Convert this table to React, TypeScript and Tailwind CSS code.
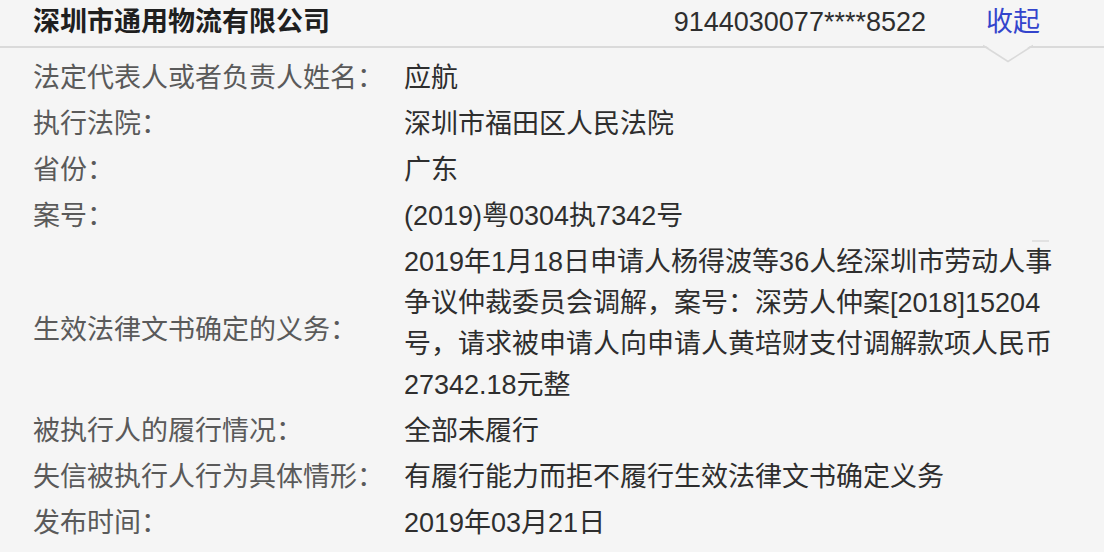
const rows: { label: string; value: string[] }[] = [
  { label: "法定代表人或者负责人姓名：", value: ["应航"] },
  { label: "执行法院：", value: ["深圳市福田区人民法院"] },
  { label: "省份：", value: ["广东"] },
  { label: "案号：", value: ["(2019)粤0304执7342号"] },
  {
    label: "生效法律文书确定的义务：",
    value: [
      "2019年1月18日申请人杨得波等36人经深圳市劳动人事",
      "争议仲裁委员会调解，案号：深劳人仲案[2018]15204",
      "号，请求被申请人向申请人黄培财支付调解款项人民币",
      "27342.18元整",
    ],
  },
  { label: "被执行人的履行情况：", value: ["全部未履行"] },
  { label: "失信被执行人行为具体情形：", value: ["有履行能力而拒不履行生效法律文书确定义务"] },
  { label: "发布时间：", value: ["2019年03月21日"] },
];

const App = () => {
  return (
    <div className="w-[1104px] h-[552px] overflow-hidden bg-[#f5f5f5] font-['Liberation_Sans','Noto_Sans_CJK_SC',sans-serif] text-[27px]">
      <div className="relative flex items-center h-[48px] pl-[33px] pr-[64px] border-b-2 border-[#dadada]">
        <h1 className="flex-1 font-bold text-[#1f1f1f] -mt-[2px]">深圳市通用物流有限公司</h1>
        <span className="text-[#2e2e2e] -mt-[2px]">9144030077****8522</span>
        <button className="ml-[60px] text-[#3344cc] -mt-[2px]">收起</button>
        <svg
          className="absolute left-[983px] top-[44px]"
          width="50"
          height="19"
          viewBox="0 0 50 19"
        >
          <polygon points="0,0 50,0 25,17" fill="#f5f5f5" />
          <polyline points="0,1.5 25,17.5 50,1.5" fill="none" stroke="#dadada" strokeWidth="1.6" />
        </svg>
      </div>

      <div className="relative grid grid-cols-[371px_1fr] gap-y-[5px] pl-[33px] pt-[10px] leading-[41px]">
        {rows.map((row) => (
          <div key={row.label} className="contents">
            <div
              className={`flex items-center text-[#5a5a5a] whitespace-nowrap ${
                row.value.length > 1 ? "pt-[12px]" : ""
              }`}
            >
              {row.label}
            </div>
            <div className="text-[#2e2e2e]">
              {row.value.map((line) => (
                <div key={line} className="whitespace-nowrap">
                  {line}
                </div>
              ))}
            </div>
          </div>
        ))}
        <span className="absolute left-[1032px] top-[192px] w-[17px] h-[2px] bg-[#e2e2e2]" />
      </div>
    </div>
  );
};

export default App;
